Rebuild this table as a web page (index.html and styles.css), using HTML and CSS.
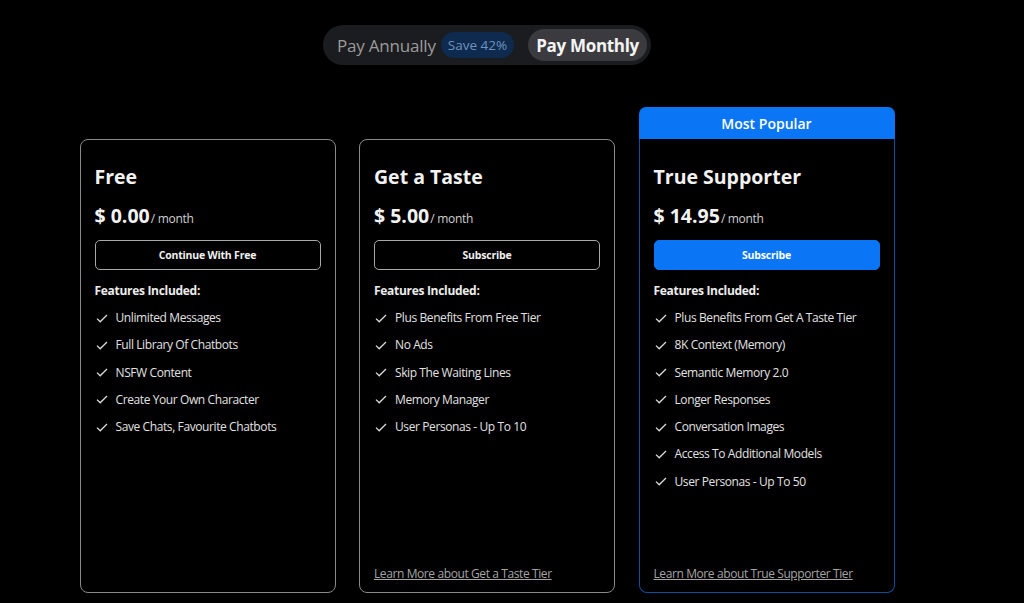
FILE: index.html
```html
<!DOCTYPE html>
<html lang="en">
<head>
<meta charset="utf-8">
<title>Pricing</title>
<link rel="stylesheet" href="styles.css">
</head>
<body>
<main class="page">
  <div class="toggle">
    <span class="opt">Pay Annually</span>
    <span class="badge">Save 42%</span>
    <span class="opt active">Pay Monthly</span>
  </div>

  <section class="plans">
    <div class="col">
      <div class="card">
        <h2 class="name">Free</h2>
        <div class="price"><b>$ 0.00</b><span class="per">/ month</span></div>
        <button class="btn">Continue With Free</button>
        <h3 class="feat-title">Features Included:</h3>
        <ul class="feats">
          <li><svg class="chk" viewBox="0 0 12 9"><path d="M1 4.6 L4.2 7.8 L11 1"/></svg>Unlimited Messages</li>
          <li><svg class="chk" viewBox="0 0 12 9"><path d="M1 4.6 L4.2 7.8 L11 1"/></svg>Full Library Of Chatbots</li>
          <li><svg class="chk" viewBox="0 0 12 9"><path d="M1 4.6 L4.2 7.8 L11 1"/></svg>NSFW Content</li>
          <li><svg class="chk" viewBox="0 0 12 9"><path d="M1 4.6 L4.2 7.8 L11 1"/></svg>Create Your Own Character</li>
          <li><svg class="chk" viewBox="0 0 12 9"><path d="M1 4.6 L4.2 7.8 L11 1"/></svg>Save Chats, Favourite Chatbots</li>
        </ul>
      </div>
    </div>

    <div class="col">
      <div class="card">
        <h2 class="name">Get a Taste</h2>
        <div class="price"><b>$ 5.00</b><span class="per">/ month</span></div>
        <button class="btn">Subscribe</button>
        <h3 class="feat-title">Features Included:</h3>
        <ul class="feats">
          <li><svg class="chk" viewBox="0 0 12 9"><path d="M1 4.6 L4.2 7.8 L11 1"/></svg>Plus Benefits From Free Tier</li>
          <li><svg class="chk" viewBox="0 0 12 9"><path d="M1 4.6 L4.2 7.8 L11 1"/></svg>No Ads</li>
          <li><svg class="chk" viewBox="0 0 12 9"><path d="M1 4.6 L4.2 7.8 L11 1"/></svg>Skip The Waiting Lines</li>
          <li><svg class="chk" viewBox="0 0 12 9"><path d="M1 4.6 L4.2 7.8 L11 1"/></svg>Memory Manager</li>
          <li><svg class="chk" viewBox="0 0 12 9"><path d="M1 4.6 L4.2 7.8 L11 1"/></svg>User Personas - Up To 10</li>
        </ul>
        <a class="more" href="#">Learn More about Get a Taste Tier</a>
      </div>
    </div>

    <div class="col">
      <div class="popular">Most Popular</div>
      <div class="card featured">
        <h2 class="name">True Supporter</h2>
        <div class="price"><b>$ 14.95</b><span class="per">/ month</span></div>
        <button class="btn primary">Subscribe</button>
        <h3 class="feat-title">Features Included:</h3>
        <ul class="feats">
          <li><svg class="chk" viewBox="0 0 12 9"><path d="M1 4.6 L4.2 7.8 L11 1"/></svg>Plus Benefits From Get A Taste Tier</li>
          <li><svg class="chk" viewBox="0 0 12 9"><path d="M1 4.6 L4.2 7.8 L11 1"/></svg>8K Context (Memory)</li>
          <li><svg class="chk" viewBox="0 0 12 9"><path d="M1 4.6 L4.2 7.8 L11 1"/></svg>Semantic Memory 2.0</li>
          <li><svg class="chk" viewBox="0 0 12 9"><path d="M1 4.6 L4.2 7.8 L11 1"/></svg>Longer Responses</li>
          <li><svg class="chk" viewBox="0 0 12 9"><path d="M1 4.6 L4.2 7.8 L11 1"/></svg>Conversation Images</li>
          <li><svg class="chk" viewBox="0 0 12 9"><path d="M1 4.6 L4.2 7.8 L11 1"/></svg>Access To Additional Models</li>
          <li><svg class="chk" viewBox="0 0 12 9"><path d="M1 4.6 L4.2 7.8 L11 1"/></svg>User Personas - Up To 50</li>
        </ul>
        <a class="more" href="#">Learn More about True Supporter Tier</a>
      </div>
    </div>
  </section>
</main>
</body>
</html>
```

FILE: styles.css
```css
* { box-sizing: border-box; }
html, body { margin: 0; padding: 0; background: #000; }
body {
  font-family: "Open Sans", "Noto Sans", "Liberation Sans", sans-serif;
  color: #ededed;
  overflow: hidden;
  height: 603px;
}
.page {
  width: 974px;
  display: flex;
  flex-direction: column;
  align-items: center;
  padding-top: 25px;
}
.toggle {
  display: flex;
  align-items: center;
  height: 40px;
  padding: 0 4px 0 14px;
  background: #1b1c1f;
  border-radius: 20px;
}
.opt {
  font-size: 17px;
  color: #9b9b9b;
  letter-spacing: -0.2px;
}
.badge {
  margin-left: 5px;
  height: 26px;
  padding: 0 7px;
  display: flex;
  align-items: center;
  font-size: 13.5px;
  color: #6f93bd;
  background: #0e2a4e;
  border-radius: 13px;
}
.opt.active {
  margin-left: 14px;
  height: 32px;
  padding: 0 8px;
  display: flex;
  align-items: center;
  font-weight: 700;
  color: #f4f4f4;
  background: #3b3b3f;
  border-radius: 16px;
  letter-spacing: -0.3px;
}
.plans {
  margin-top: 42px;
  display: grid;
  grid-template-columns: repeat(3, 256px);
  column-gap: 23.5px;
  align-items: end;
}
.col { display: flex; flex-direction: column; }
.popular {
  height: 32px;
  background: #0a76f6;
  color: #fff;
  font-size: 14px;
  font-weight: 600;
  display: flex;
  align-items: center;
  justify-content: center;
  border-radius: 7px 7px 0 0;
}
.card {
  height: 454px;
  border: 1px solid #8a8a8a;
  border-radius: 8px;
  padding: 25px 14px 9px;
  display: flex;
  flex-direction: column;
}
.card.featured {
  border-color: #0d4f9e;
  border-top: none;
  border-radius: 0 0 8px 8px;
  padding-top: 26px;
}
.name {
  margin: 0;
  font-size: 19.5px;
  line-height: 24px;
  font-weight: 700;
  color: #f2f2f2;
}
.price {
  margin-top: 15px;
  height: 24px;
  line-height: 24px;
  display: flex;
  align-items: baseline;
}
.price b { font-size: 19.5px; font-weight: 700; color: #f2f2f2; }
.per { font-size: 12px; color: #d0d0d0; margin-left: 1px; letter-spacing: -0.3px; }
.btn {
  margin-top: 12px;
  height: 30px;
  width: 100%;
  background: transparent;
  border: 1px solid #a8a8a8;
  border-radius: 5px;
  color: #f0f0f0;
  font-family: inherit;
  font-size: 10.5px;
  font-weight: 700;
  letter-spacing: -0.2px;
  cursor: pointer;
}
.btn.primary { background: #0a76f6; border-color: #0a76f6; color: #fff; }
.feat-title {
  margin: 12px 0 0;
  font-size: 12px;
  line-height: 18px;
  font-weight: 700;
  color: #ececec;
  letter-spacing: -0.3px;
}
.feats {
  list-style: none;
  margin: 9px 0 0;
  padding: 0;
  display: flex;
  flex-direction: column;
  gap: 9.3px;
}
.feats li {
  display: flex;
  align-items: center;
  font-size: 12px;
  line-height: 18px;
  color: #e2e2e2;
  letter-spacing: -0.4px;
}
.chk {
  width: 12px;
  height: 9px;
  margin: 0 8px 0 1px;
  flex: none;
  fill: none;
  stroke: #dcdcdc;
  stroke-width: 1.3;
}
.more {
  margin-top: auto;
  font-size: 12px;
  line-height: 18px;
  color: #a5a5a5;
  text-decoration: underline;
  letter-spacing: -0.4px;
}
```
